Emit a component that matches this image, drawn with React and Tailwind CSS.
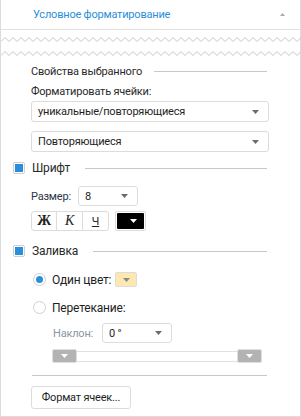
import React from 'react';

const Caret = ({ color = '#6b6b6b' }) => (
  <svg width="7" height="4" viewBox="0 0 7 4"><path d="M0 0h7L3.5 4z" fill={color} /></svg>
);

const Select = ({ value, className = '' }) => (
  <div className={'flex items-center justify-between rounded-[3px] border border-[#dcdcdc] bg-white pl-[6px] pr-[9px] leading-none text-[#1e1e1e] ' + className}>
    <span>{value}</span>
    <Caret />
  </div>
);

const Check = () => (
  <div className="flex h-[12px] w-[12px] items-center justify-center rounded-[2px] border border-[#cfcfcf] bg-white">
    <div className="h-[8px] w-[8px] bg-[#2a8fd8]" />
  </div>
);

const Radio = ({ on }) => (
  <div className="flex h-[13px] w-[13px] items-center justify-center rounded-full border border-[#cfcfcf] bg-white">
    {on && <div className="h-[7px] w-[7px] rounded-full bg-[#2a8fd8]" />}
  </div>
);

const Group = ({ title, className = '' }) => (
  <div className={'flex h-[12px] items-center pl-[12px] pr-[33px] ' + className}>
    <Check />
    <span className="ml-[7px] text-[12px] leading-none text-[#2a2a2a]">{title}</span>
    <div className="ml-[15px] h-px flex-1 bg-[#c8c8c8]" />
  </div>
);

const Handle = () => (
  <div className="flex h-[14px] w-[25px] items-center justify-center rounded-[2px] border border-[#dedede] bg-[#b3b3b3]">
    <Caret color="#fff" />
  </div>
);

export default function App() {
  const zig = [];
  for (let x = 0; x <= 304; x += 8) zig.push(`${x},4.5 ${x + 4},0.5`);
  const pts = zig.join(' ');

  return (
    <div className="h-[417px] w-[301px] border-x border-b border-[#dcdcdc] bg-white text-[11px] tracking-[-0.2px] text-[#2a2a2a]" style={{ fontFamily: 'Roboto, "Noto Sans", sans-serif' }}>
      {/* header */}
      <div className="flex h-[30px] items-center border-b border-[#e2e2e2] pl-[32px] pr-[15px]">
        <span className="flex-1 text-[11px] leading-none text-[#2a8fd8]">Условное форматирование</span>
        <svg width="5" height="3" viewBox="0 0 5 3"><path d="M0 3h5L2.5 0z" fill="#aaa" /></svg>
      </div>

      {/* torn edge */}
      <svg className="mt-[7px] block" width="300" height="19" viewBox="0 0 300 19">
        <polyline points={pts} fill="none" stroke="#c6c6c6" strokeWidth="1" />
        <polyline points={pts} transform="translate(0 14)" fill="none" stroke="#c6c6c6" strokeWidth="1" />
      </svg>

      <div className="pl-[30px] pr-[31px]">
        <div className="mt-[7px] flex h-[16px] items-center pr-[2px]">
          <span className="leading-none">Свойства выбранного</span>
          <div className="ml-[12px] h-px flex-1 bg-[#c8c8c8]" />
        </div>
        <div className="mt-[4px] flex h-[16px] items-center leading-none">Форматировать ячейки:</div>
        <Select value="уникальные/повторяющиеся" className="mt-[2px] h-[21px]" />
        <Select value="Повторяющиеся" className="mt-[9px] h-[21px]" />
      </div>

      <Group title="Шрифт" className="mt-[10px]" />

      <div className="pl-[30px]">
        <div className="mt-[12px] flex items-center gap-[7px]">
          <span className="leading-none text-[#2b3446]">Размер:</span>
          <Select value="8" className="h-[20px] w-[60px]" />
        </div>
        <div className="mt-[5px] flex items-center">
          <div className="flex h-[20px] overflow-hidden rounded-[3px] border border-[#dcdcdc]">
            <div className="flex w-[25px] items-center justify-center border-r border-[#dcdcdc] text-[14px] font-bold leading-none text-[#222]" style={{ fontFamily: '"Liberation Serif", serif' }}>Ж</div>
            <div className="flex w-[26px] items-center justify-center border-r border-[#dcdcdc] text-[14px] italic leading-none text-[#222]" style={{ fontFamily: '"Liberation Serif", serif' }}>К</div>
            <div className="flex w-[25px] items-center justify-center leading-none text-[#222] underline">Ч</div>
          </div>
          <div className="ml-[6px] flex h-[20px] w-[31px] items-center justify-center rounded-[2px] border border-[#dcdcdc] bg-white p-px">
            <div className="flex h-full w-full items-center justify-center rounded-[1px] bg-black pl-[6px]">
              <Caret color="#fff" />
            </div>
          </div>
        </div>
      </div>

      <Group title="Заливка" className="mt-[14px]" />

      <div className="pl-[32px]">
        <div className="mt-[16px] flex h-[13px] items-center">
          <Radio on />
          <span className="ml-[6px] text-[12px] leading-none text-[#1e1e1e]">Один цвет:</span>
          <div className="ml-[4px] flex h-[15px] w-[22px] items-center justify-center rounded-[2px] border border-[#dcdcdc] bg-[#fce8b0]">
            <Caret color="#8a8a8a" />
          </div>
        </div>
        <div className="mt-[15px] flex h-[13px] items-center">
          <Radio />
          <span className="ml-[6px] text-[12px] leading-none text-[#1e1e1e]">Перетекание:</span>
        </div>
      </div>

      <div className="pl-[51px]">
        <div className="mt-[9px] flex items-center gap-[9px] pl-px">
          <span className="leading-none text-[#8d95a3]">Наклон:</span>
          <Select value="0 °" className="h-[20px] w-[70px]" />
        </div>
        <div className="mt-[6px] flex w-[210px] items-center">
          <Handle />
          <div className="h-[11px] flex-1 border-y border-[#e0e0e0]" />
          <Handle />
        </div>
      </div>

      <div className="ml-[31px] mr-[33px] mt-[12px] h-px bg-[#c8c8c8]" />

      <div className="pl-[30px] pt-[10px]">
        <button className="h-[23px] w-[100px] rounded-[3px] border border-[#dcdcdc] bg-white leading-none text-[#1e1e1e]">Формат ячеек...</button>
      </div>
    </div>
  );
}
